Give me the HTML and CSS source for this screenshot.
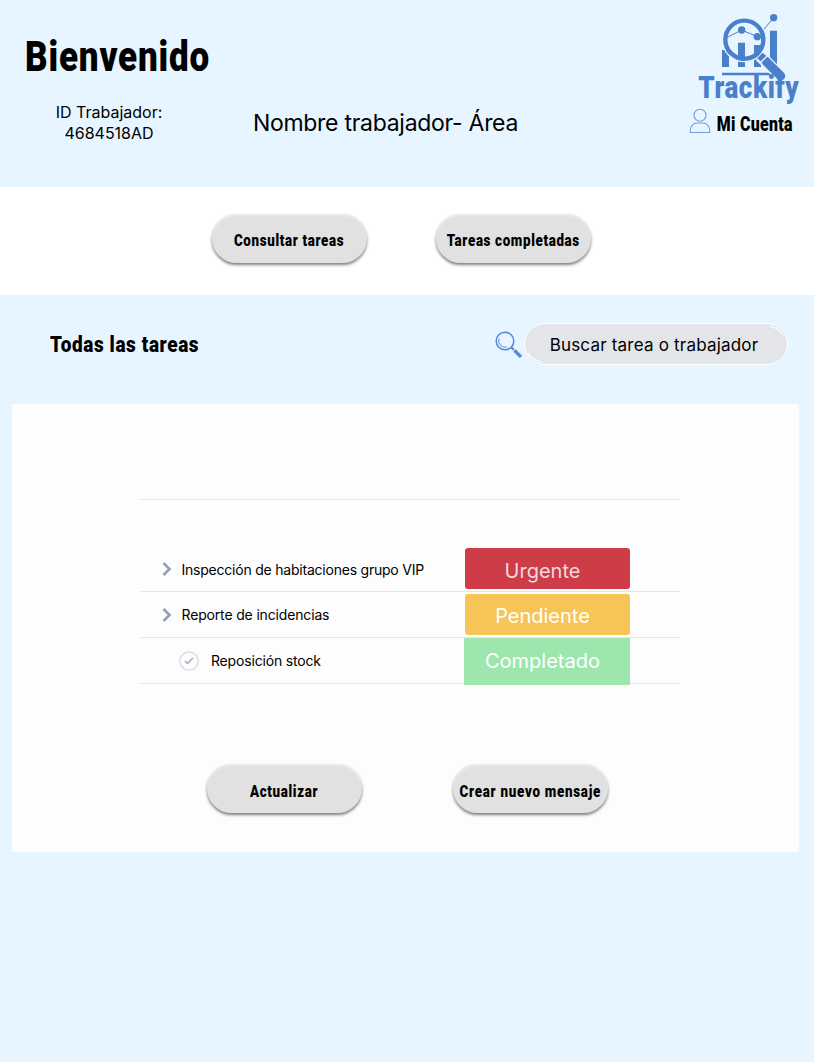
FILE: index.html
```html
<!DOCTYPE html>
<html lang="es">
<head>
<meta charset="utf-8">
<title>Trackify</title>
<link rel="stylesheet" href="styles.css">
</head>
<body>
<header class="header">
  <div class="identity">
    <h1 class="title display"><span class="fit">Bienvenido</span></h1>
    <p class="worker-id">ID Trabajador:<br>4684518AD</p>
  </div>
  <p class="worker-name">Nombre trabajador- Área</p>
  <div class="brand">
    <svg class="logo" viewBox="48 21 315 279" aria-label="Trackify">
      <g fill="#4a7fca">
        <path d="M126 135h21v51h-21zM174 113h21v73h-21zM222 120h21v66h-21zM270 77h21v109h-21zM126 203h148v8H126z"/>
        <circle cx="281" cy="38" r="11"/>
        <circle cx="185" cy="75" r="11"/>
        <circle cx="232" cy="95" r="11"/>
      </g>
      <path d="M140 98L185 75L232 95" fill="none" stroke="#4a7fca" stroke-width="3"/>
      <path d="M250 75L281 38" stroke="#4a7fca" stroke-width="3"/>
      <circle cx="193" cy="104" r="66" fill="none" stroke="#e6f5ff" stroke-width="4"/>
      <circle cx="193" cy="104" r="57" fill="none" stroke="#4a7fca" stroke-width="13"/>
      <path d="M240 152L308 220" stroke="#e6f5ff" stroke-width="36"/>
      <path d="M232 160l16-17 12 11-16 17z" fill="#4a7fca"/>
      <path d="M258 169L302 213" stroke="#4a7fca" stroke-width="27" stroke-linecap="round"/>
      <path d="M240 174l25-25" stroke="#e6f5ff" stroke-width="4"/>
      <text class="logo-text" x="55" y="278" textLength="303" lengthAdjust="spacingAndGlyphs">Trackify</text>
    </svg>
    <a class="account">
      <svg class="user" viewBox="0 0 22 26" fill="none" stroke="#6f9eda" stroke-width="1.1"><circle cx="11" cy="7.2" r="6"/><path d="M1.300 24.500v-2.200c0-4.300 3-7.300 7-7.300h5.400c4 0 7 3 7 7.300v2.200z"/></svg>
      <span class="account-label display"><span class="fit">Mi Cuenta</span></span>
    </a>
  </div>
</header>

<nav class="tabs">
  <button class="pill display"><span class="fit consult">Consultar tareas</span></button>
  <button class="pill display"><span class="fit complete">Tareas completadas</span></button>
</nav>

<main>
  <div class="toolbar">
    <h2 class="subtitle display"><span class="fit">Todas las tareas</span></h2>
    <svg class="lens" viewBox="0 0 28 28" fill="none" stroke="#5288d6"><circle cx="10" cy="10" r="8.800" stroke-width="1.500"/><path d="M4.200 7.500a6.300 6.300 0 0 0 7.600 8.500" stroke-width=".9"/><path d="M16 16l3 3" stroke-width="2"/><path d="M19.500 19.500l6.500 6.300" stroke-width="3.200"/></svg>
    <div class="search">
      <span>Buscar tarea o trabajador</span>
      <svg class="shine" viewBox="0 0 264 42" fill="none" stroke="#fff" stroke-width="1.200"><path d="M246 3q8 2 13 9M4 30q4 7 14 9"/></svg>
    </div>
  </div>

  <section class="card">
    <div class="table">
      <div class="thead"></div>
      <div class="row first">
        <svg class="chevron" viewBox="0 0 10 14"><path d="M1.500 1l6 6-6 6" fill="none" stroke="#949db5" stroke-width="2.500"/></svg>
        <span class="task inspect">Inspección de habitaciones grupo VIP</span>
        <span class="status urgent">Urgente</span>
      </div>
      <div class="row">
        <svg class="chevron" viewBox="0 0 10 14"><path d="M1.500 1l6 6-6 6" fill="none" stroke="#949db5" stroke-width="2.500"/></svg>
        <span class="task report">Reporte de incidencias</span>
        <span class="status pending">Pendiente</span>
      </div>
      <div class="row">
        <svg class="check" viewBox="0 0 20 20" fill="none"><circle cx="10" cy="10" r="9.200" stroke="#d3d8e9" stroke-width="1.200"/><path d="M6 10l2.500 2.500 5.500-5.500" stroke="#949db5" stroke-width="1.200"/></svg>
        <span class="task stock">Reposición stock</span>
        <span class="status done">Completado</span>
      </div>
    </div>
    <div class="actions">
      <button class="pill display"><span class="fit update">Actualizar</span></button>
      <button class="pill display"><span class="fit create">Crear nuevo mensaje</span></button>
    </div>
  </section>
</main>
</body>
</html>
```
FILE: styles.css
```css
* { box-sizing: border-box; }
body {
  margin: 0;
  min-height: 1062px;
  background: #e6f5ff;
  color: #000;
  font-family: "Inter", "Liberation Sans", sans-serif;
}
h1, h2, p { margin: 0; }
.display {
  font-family: "Roboto", "Liberation Sans", sans-serif;
  font-weight: 900;
  white-space: nowrap;
}
.fit { display: inline-block; }

.header { display: flex; height: 187px; }
.identity { width: 218px; padding-top: 30px; }
.title { width: 186px; margin-left: 25px; height: 50px; font-size: 43px; line-height: 52px; letter-spacing: 1px; }
.title .fit { transform: scaleX(.815); transform-origin: left; }
.worker-id { margin-top: 22px; text-align: center; font-size: 16px; line-height: 21px; }
.worker-name {
  width: 335px;
  padding-top: 107px;
  text-align: center;
  white-space: nowrap;
  font-size: 23px;
  letter-spacing: -.28px;
  line-height: 33px;
}
.brand { margin-left: auto; width: 118px; padding-top: 12px; }
.logo { display: block; width: 105px; height: 93px; overflow: visible; }
.logo-text { font-family: "Roboto", sans-serif; font-weight: 900; font-size: 92px; letter-spacing: 2px; fill: #4a7fca; }
.account { display: flex; align-items: center; margin: 3px 0 0 -7px; height: 26px; }
.user { width: 22px; height: 26px; }
.account-label { display: flex; justify-content: center; width: 78px; margin: 7px 0 0 5px; font-size: 19.5px; letter-spacing: .4px; line-height: 24px; }
.account-label .fit { transform: scaleX(.815); }

.tabs {
  display: flex;
  gap: 69px;
  height: 108px;
  padding: 27px 0 0 211.500px;
  background: #fff;
}
.pill {
  display: flex;
  align-items: center;
  justify-content: center;
  width: 155px;
  height: 49px;
  padding: 5px 0 0;
  border: 0;
  border-radius: 25px;
  background: #e1e1e1;
  color: #000;
  font-size: 16.5px;
  letter-spacing: .8px;
  line-height: 20px;
  box-shadow: 0 2px 3px rgba(0, 0, 0, .5), inset 0 2px 1px #ebebeb;
}
.pill .fit { transform: scaleX(.81); }

.toolbar { display: flex; height: 109px; padding: 28px 26px 0 50px; }
.subtitle { width: 150px; height: 42px; font-size: 22.5px; letter-spacing: .7px; line-height: 43px; }
.subtitle .fit { transform: scaleX(.845); transform-origin: left; }
.lens { width: 28px; height: 28px; margin: 8px 1px 0 auto; }
.search {
  position: relative;
  width: 264px;
  height: 42px;
  padding-right: 4px;
  border: 1px solid #fff;
  border-radius: 21px;
  background: #e4e5e8;
  text-align: center;
  white-space: nowrap;
  font-size: 17px;
  letter-spacing: .2px;
  line-height: 43px;
}
.shine { position: absolute; inset: -1px; width: 264px; height: 42px; }

.card {
  width: 787px;
  height: 448px;
  margin-left: 12px;
  padding: 48px 0 0 128px;
  background: #fdfdfe;
}
.table { width: 540px; }
.thead { height: 48px; border-bottom: 1px solid #e5e6ea; }
.row {
  display: flex;
  align-items: center;
  height: 46px;
  border-bottom: 1px solid #e5e6ea;
}
.first { height: 92px; padding-top: 46px; }
.chevron { width: 10px; height: 14px; margin-left: 22px; }
.check { width: 20px; height: 20px; margin-left: 39px; }
.task { margin-left: 9.500px; font-size: 14px; white-space: nowrap; }
.inspect { letter-spacing: -.22px; padding-top: 1px; }
.report { letter-spacing: -.16px; }
.stock { margin-left: 12px; letter-spacing: -.18px; }
.status {
  flex: none;
  width: 165px;
  height: 41px;
  margin: 0 50.500px 0 auto;
  padding-right: 9px;
  border-radius: 3px;
  color: #fff;
  text-align: center;
  font-size: 20px;
  line-height: 47px;
}
.urgent { background: #ce3d47; color: #f3d8df; }
.pending { background: #f6c557; line-height: 44px; }
.done { width: 166px; height: 47px; margin: 1px 50px 0 auto; border-radius: 0; background: #9de6ae; line-height: 47px; }

.actions { display: flex; gap: 91px; margin: 80px 0 0 67px; }
.actions .pill { padding-top: 6px; }
.create { letter-spacing: .9px; }
```
